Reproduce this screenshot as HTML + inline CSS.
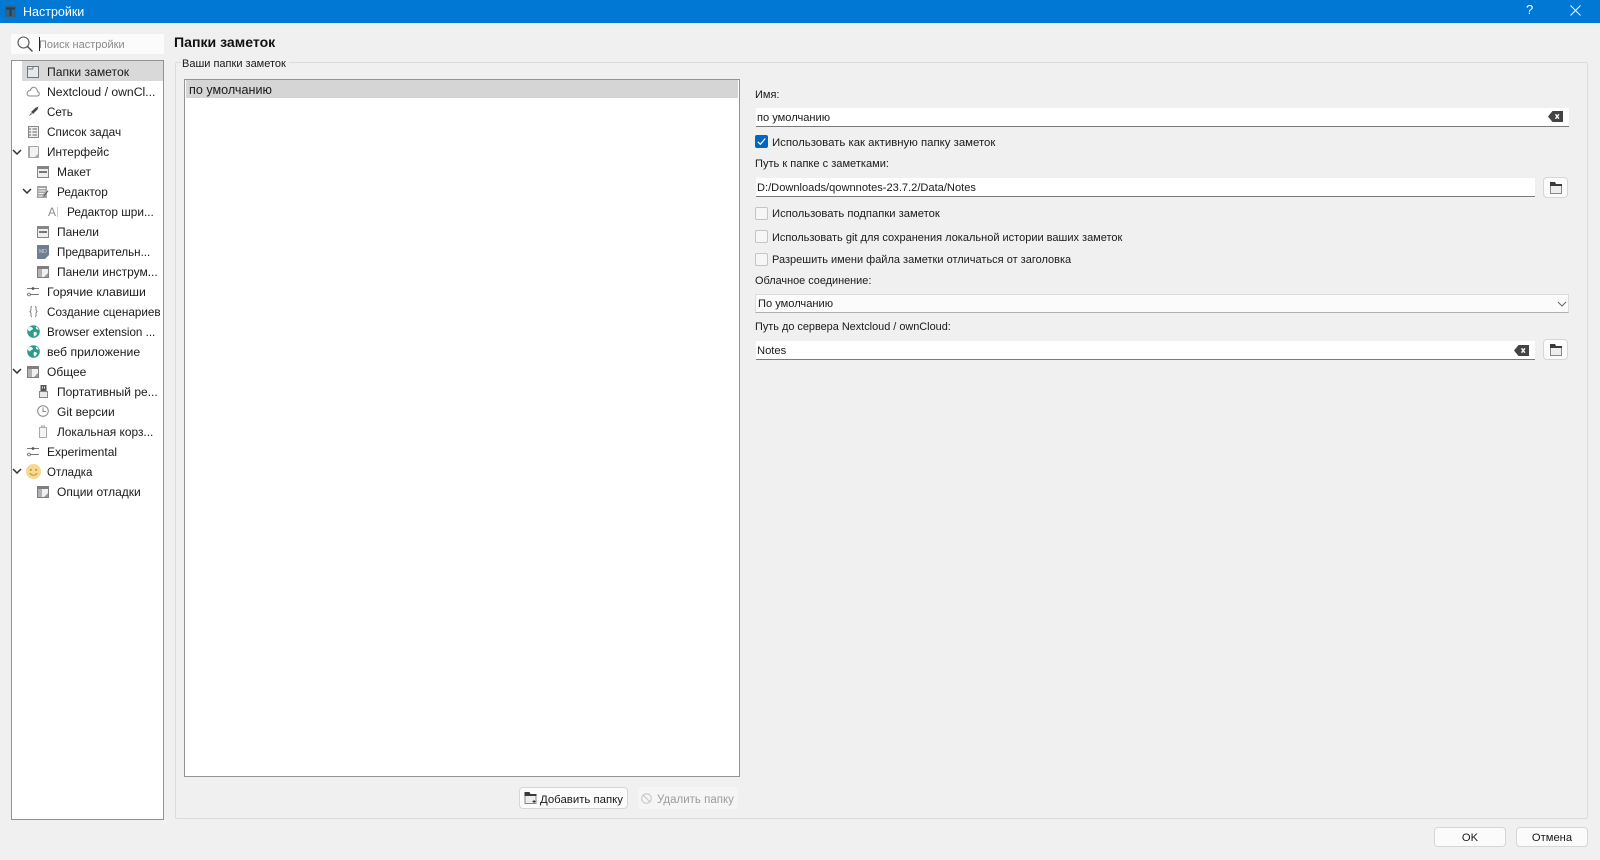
<!DOCTYPE html>
<html lang="ru">
<head>
<meta charset="utf-8">
<title>Настройки</title>
<style>
html,body{margin:0;padding:0;width:1600px;height:860px;overflow:hidden;background:#f0f0f0}
body{position:relative;font-family:"Liberation Sans","Noto Sans CJK SC",sans-serif;font-size:12px;color:#1a1a1a}
.a{position:absolute;white-space:nowrap}
.t{position:absolute;white-space:nowrap;height:20px;line-height:20px}
.f{font-size:11px}
svg{position:absolute;display:block;overflow:visible}
.input{position:absolute;background:#fff;border-bottom:1px solid #7a7a7a;box-sizing:border-box;height:19px;line-height:21px;padding-left:1px;font-size:11.100px}
.cb{position:absolute;width:13px;height:13px;box-sizing:border-box;border:1px solid #c4c4c4;background:#f6f6f6;border-radius:2px}
.btn{position:absolute;box-sizing:border-box;background:#fbfbfb;border:1px solid #d6d6d6;border-radius:4px;text-align:center}
</style>
</head>
<body>
<svg width="0" height="0" style="position:absolute">
<defs>
<symbol id="panel" viewBox="0 0 12 12"><rect x="0" y="0" width="12" height="12" fill="#858585"/><rect x="1" y="3" width="10" height="8" fill="#eee"/><rect x="2" y="5" width="8" height="2" fill="#777"/></symbol>
<symbol id="side" viewBox="0 0 12 12"><rect x="0" y="0" width="12" height="12" fill="#7f7f7f"/><rect x="1" y="3" width="4" height="8" fill="#b2b2b2"/><rect x="5" y="3" width="6" height="8" fill="#f0f0f0"/><path d="M11 7v4H7z" fill="#999"/></symbol>
<symbol id="sliders" viewBox="0 0 12 11"><path d="M0 2.500h12M0 8.500h12" stroke="#777" stroke-width="1"/><circle cx="6" cy="2.500" r="1.400" fill="#555"/><circle cx="2" cy="8.500" r="1.400" fill="#fff" stroke="#666" stroke-width=".8"/></symbol>
<symbol id="globe" viewBox="0 0 13 13"><circle cx="6.500" cy="6.500" r="6.300" fill="#2e9c8a"/><path d="M3 1.800c1.600.3 2.800.8 3 2.200-.9 1.100-2.400 1-3 2.500C1.600 6 .8 5 .9 4 1.400 3 2 2.300 3 1.800zM7 7c1.500-.3 2.500.3 3 1.200-.3 1.500-1.300 2.600-2.500 3.300C6.500 10.200 6.200 8.200 7 7zM9 1.500c1.300.6 2.300 1.700 2.800 3-.9.300-2 .1-2.600-.7-.4-.6-.4-1.400-.2-2.300z" fill="#f3f8f7"/></symbol>
<symbol id="folderdark" viewBox="0 0 12 12"><path d="M.5 3h11v8.500H.5z" fill="#ededed" stroke="#888" stroke-width="1"/><path d="M0 0h5l1 2h6v2H0z" fill="#3a3a3a"/></symbol>
<symbol id="clear" viewBox="0 0 15 11"><path d="M4.500 0H15v11H4.500L0 5.500z" fill="#444"/><path d="M7.500 3.300l3.400 4.400M10.900 3.300L7.500 7.700" stroke="#f4f4f4" stroke-width="1.500"/></symbol>
<symbol id="chev" viewBox="0 0 10 6"><path d="M1 1l4 4 4-4" fill="none" stroke="#333" stroke-width="1.500"/></symbol>
</defs>
</svg>

<!-- Title bar -->
<div class="a" style="left:0;top:0;width:1600px;height:23px;background:#0078d4"></div>
<div class="a" style="left:0;top:23px;width:1600px;height:1px;background:#d8eef8"></div>
<svg style="left:5px;top:6px" width="11" height="11" viewBox="0 0 11 11"><rect width="11" height="11" fill="#33617f"/><path d="M1 1.500h9v2H6.500V10h-2V3.500H1z" fill="#2a3d4a"/></svg>
<div class="t" style="left:23px;top:2px;color:#fff;font-size:12.500px">Настройки</div>
<div class="t" style="left:1526px;top:0;color:#fff;font-size:13px">?</div>
<svg style="left:1570px;top:5px" width="11" height="11" viewBox="0 0 11 11"><path d="M.5.500l10 10M10.500.500l-10 10" stroke="#fff" stroke-width="1" fill="none"/></svg>

<!-- Search -->
<div class="a" style="left:11px;top:34px;width:153px;height:20px;background:#fbfbfb"></div>
<svg style="left:17px;top:36px" width="16" height="16" viewBox="0 0 16 16"><circle cx="6.500" cy="6.500" r="5.500" fill="none" stroke="#555" stroke-width="1.100"/><path d="M10.500 10.500l5 5" stroke="#444" stroke-width="1.300"/></svg>
<div class="t" style="left:39px;top:35px;color:#8a8a8a;font-size:11px;height:20px">Поиск настройки</div>
<div class="a" style="left:39px;top:37px;width:1px;height:14px;background:#222"></div>

<!-- Tree -->
<div class="a" style="left:11px;top:60px;width:153px;height:760px;box-sizing:border-box;background:#fff;border:1px solid #939393"></div>
<div class="a" style="left:22px;top:61px;width:141px;height:20px;background:#d9d9d9"></div>

<div class="t" style="left:47px;top:62px;font-size:12.150px">Папки заметок</div>
<div class="t" style="left:47px;top:82px;font-size:12.200px">Nextcloud / ownCl...</div>
<div class="t" style="left:47px;top:103px;font-size:11.600px">Сеть</div>
<div class="t" style="left:47px;top:122px;font-size:11.850px">Список задач</div>
<div class="t" style="left:47px;top:142px;font-size:11.800px">Интерфейс</div>
<div class="t" style="left:57px;top:162px">Макет</div>
<div class="t" style="left:57px;top:182px;font-size:11.800px">Редактор</div>
<div class="t" style="left:67px;top:202px;font-size:11.850px">Редактор шри...</div>
<div class="t" style="left:57px;top:222px">Панели</div>
<div class="t" style="left:57px;top:243px;font-size:11.600px">Предварительн...</div>
<div class="t" style="left:57px;top:262px">Панели инструм...</div>
<div class="t" style="left:47px;top:282px;font-size:12.250px">Горячие клавиши</div>
<div class="t" style="left:47px;top:303px;font-size:11.700px">Создание сценариев</div>
<div class="t" style="left:47px;top:323px;font-size:11.600px">Browser extension ...</div>
<div class="t" style="left:47px;top:342px;font-size:12.250px">веб приложение</div>
<div class="t" style="left:47px;top:362px">Общее</div>
<div class="t" style="left:57px;top:382px">Портативный ре...</div>
<div class="t" style="left:57px;top:402px">Git версии</div>
<div class="t" style="left:57px;top:422px;font-size:11.900px">Локальная корз...</div>
<div class="t" style="left:47px;top:442px">Experimental</div>
<div class="t" style="left:47px;top:463px;font-size:11.500px">Отладка</div>
<div class="t" style="left:57px;top:482px">Опции отладки</div>

<!-- Chevrons -->
<svg style="left:12px;top:149px" width="10" height="6"><use href="#chev"/></svg>
<svg style="left:22px;top:188px" width="10" height="6"><use href="#chev"/></svg>
<svg style="left:12px;top:368px" width="10" height="6"><use href="#chev"/></svg>
<svg style="left:12px;top:468px" width="10" height="6"><use href="#chev"/></svg>

<!-- Tree icons -->
<svg style="left:27px;top:66px" width="12" height="12" viewBox="0 0 12 12"><rect x=".5" y=".5" width="11" height="11" fill="#e6e9ec" stroke="#70767c"/><path d="M.5 3h5l1-2.500" fill="none" stroke="#70767c"/></svg>
<svg style="left:26px;top:86px" width="14" height="11" viewBox="0 0 14 11"><path d="M3.500 10h7.500c3 0 3-4 .5-4.300C11 2 8.500.5 6.500 1.500 5 2.300 4.500 3.500 4.300 4.500 1.500 4.500 0 8 2 9.500c.4.300 1 .5 1.500.5z" fill="#fff" stroke="#8a8a8a"/></svg>
<svg style="left:28px;top:106px" width="11" height="11" viewBox="0 0 11 11"><path d="M10.500.5L7.500 1.800 3 6 5 8l4.500-4.500zM3 7L.8 10.200 4 8z" fill="#4a4a4a"/></svg>
<svg style="left:28px;top:126px" width="11" height="12" viewBox="0 0 11 12"><rect width="11" height="12" fill="#888"/><rect x="1" y="1" width="9" height="10" fill="#eee"/><path d="M1 3h2M1 6h2M1 9h2M4.500 3H9M4.500 6H9M4.500 9H9" stroke="#666"/></svg>
<svg style="left:28px;top:146px" width="11" height="12" viewBox="0 0 11 12"><rect width="11" height="12" rx="1" fill="#a5a5a5"/><path d="M2 1h8v7l-3 3H2z" fill="#f2f2f2"/></svg>
<svg style="left:37px;top:166px" width="12" height="12"><use href="#panel"/></svg>
<svg style="left:37px;top:186px" width="12" height="12" viewBox="0 0 12 12"><rect x="0" y="0" width="10" height="12" fill="#a5a5a5"/><path d="M1.500 2.500h7M1.500 5h7M1.500 7.500h5M1.500 10h4" stroke="#f3f3f3"/><path d="M11.500 5l-4 5-1 1.500 .3-2 3.700-5z" fill="#555"/></svg>
<div class="t" style="left:48px;top:202px;color:#8a8a8a;font-size:12px">A</div>
<div class="a" style="left:57px;top:207px;width:1px;height:10px;background:#ccc"></div>
<svg style="left:37px;top:226px" width="12" height="12"><use href="#panel"/></svg>
<svg style="left:37px;top:245px" width="12" height="14" viewBox="0 0 12 14"><path d="M0 0h12v10l-4 4H0z" fill="#6f7f8f"/><text x="2" y="8" font-size="5" fill="#cfd6dc" font-family="Liberation Sans">MD</text></svg>
<svg style="left:37px;top:266px" width="12" height="12"><use href="#side"/></svg>
<svg style="left:27px;top:286px" width="12" height="11"><use href="#sliders"/></svg>
<svg style="left:29px;top:306px" width="9" height="11" viewBox="0 0 9 11"><path d="M3 .5C1.500.5 2 2 2 3.500 2 4.800 1 5.500.5 5.500c.5 0 1.500.7 1.500 2S1.500 10.500 3 10.500M6 .5c1.500 0 1 1.500 1 3 0 1.300 1 2 1.500 2-.5 0-1.500.7-1.500 2s.5 3-1 3" fill="none" stroke="#777" stroke-width=".9"/></svg>
<svg style="left:27px;top:325px" width="13" height="13"><use href="#globe"/></svg>
<svg style="left:27px;top:345px" width="13" height="13"><use href="#globe"/></svg>
<svg style="left:27px;top:366px" width="12" height="12"><use href="#side"/></svg>
<svg style="left:39px;top:385px" width="9" height="13" viewBox="0 0 9 13"><rect x="1.500" y="0" width="6" height="6" fill="#555"/><rect x="3" y="1.500" width="1" height="2" fill="#ddd"/><rect x="5" y="1.500" width="1" height="2" fill="#ddd"/><rect x=".5" y="6.500" width="8" height="6" fill="#e9e9e9" stroke="#888"/></svg>
<svg style="left:37px;top:405px" width="12" height="12" viewBox="0 0 12 12"><circle cx="6" cy="6" r="5.300" fill="#fff" stroke="#888"/><path d="M6 2.500V6.500H9" fill="none" stroke="#888"/></svg>
<svg style="left:38px;top:425px" width="10" height="13" viewBox="0 0 10 13"><path d="M1.500 2.500h7v10h-7zM3.500 2.500V1h3v1.500" fill="#f4f4f4" stroke="#aaa"/></svg>
<svg style="left:27px;top:446px" width="12" height="11"><use href="#sliders"/></svg>
<svg style="left:26px;top:464px" width="15" height="15" viewBox="0 0 14 14"><circle cx="7" cy="7" r="7" fill="#f8d88e"/><circle cx="4.500" cy="5.500" r=".8" fill="#a5752a"/><circle cx="9.500" cy="5.500" r=".8" fill="#a5752a"/><path d="M3.500 8.500c1.500 2.500 5.500 2.500 7 0" fill="none" stroke="#b8862f" stroke-width=".8"/></svg>
<svg style="left:37px;top:486px" width="12" height="12"><use href="#side"/></svg>

<!-- Header -->
<div class="t" style="left:174px;top:32px;font-weight:bold;font-size:14.100px;color:#111">Папки заметок</div>

<!-- Group -->
<div class="a" style="left:175px;top:62px;width:1413px;height:757px;box-sizing:border-box;border:1px solid #dcdcdc;border-radius:2px"></div>
<div class="a" style="left:181px;top:56px;width:108px;height:14px;background:#f0f0f0"></div>
<div class="t f" style="left:182px;top:54px">Ваши папки заметок</div>

<!-- List -->
<div class="a" style="left:184px;top:79px;width:556px;height:698px;box-sizing:border-box;background:#fff;border:1px solid #939393"></div>
<div class="a" style="left:186px;top:80px;width:552px;height:18px;background:#d5d5d5"></div>
<div class="t" style="left:189px;top:80px;font-size:12.600px">по умолчанию</div>

<!-- Bottom-of-list buttons -->
<div class="btn" style="left:519px;top:787px;width:109px;height:22px"></div>
<svg style="left:524px;top:792px" width="13" height="12" viewBox="0 0 12 12"><path d="M.5 3h11v8.500H.5z" fill="#ededed" stroke="#888"/><path d="M0 0h5l1 2h6v2H0z" fill="#3a3a3a"/><path d="M8 9.500h3M9.500 8v3" stroke="#333"/></svg>
<div class="t" style="left:540px;top:790px;font-size:11.400px">Добавить папку</div>
<div class="a" style="left:638px;top:787px;width:100px;height:22px;background:#f5f5f5;border-radius:3px"></div>
<svg style="left:641px;top:793px" width="11" height="11" viewBox="0 0 11 11"><circle cx="5.500" cy="5.500" r="4.800" fill="none" stroke="#c4c4c4" stroke-width="1"/><path d="M2 2l7 7" stroke="#c4c4c4" stroke-width="1"/></svg>
<div class="t" style="left:657px;top:790px;font-size:11.500px;color:#9c9c9c">Удалить папку</div>

<!-- Right form -->
<div class="t f" style="left:755px;top:85px">Имя:</div>
<div class="input" style="left:756px;top:108px;width:813px">по умолчанию</div>
<svg style="left:1548px;top:111px" width="15" height="11"><use href="#clear"/></svg>

<div class="cb" style="left:755px;top:135px;background:#0067c0;border-color:#0067c0"></div>
<svg style="left:757px;top:137px" width="9" height="9" viewBox="0 0 9 9"><path d="M.8 4.800l2.500 2.500L8.300 1.500" fill="none" stroke="#fff" stroke-width="1.200"/></svg>
<div class="t" style="left:772px;top:133px;font-size:11.400px">Использовать как активную папку заметок</div>

<div class="t" style="left:755px;top:154px;font-size:11.070px">Путь к папке с заметками:</div>
<div class="input" style="left:756px;top:178px;width:779px">D:/Downloads/qownnotes-23.7.2/Data/Notes</div>
<div class="btn" style="left:1543px;top:177px;width:25px;height:21px"></div>
<svg style="left:1550px;top:182px" width="12" height="12"><use href="#folderdark"/></svg>

<div class="cb" style="left:755px;top:207px"></div>
<div class="t" style="left:772px;top:204px;font-size:11.230px">Использовать подпапки заметок</div>
<div class="cb" style="left:755px;top:230px"></div>
<div class="t f" style="left:772px;top:228px">Использовать git для сохранения локальной истории ваших заметок</div>
<div class="cb" style="left:755px;top:253px"></div>
<div class="t f" style="left:772px;top:250px">Разрешить имени файла заметки отличаться от заголовка</div>

<div class="t" style="left:755px;top:271px;font-size:10.900px">Облачное соединение:</div>
<div class="a" style="left:755px;top:294px;width:814px;height:19px;box-sizing:border-box;background:#fbfbfb;border:1px solid #dcdcdc;border-bottom-color:#b0b0b0;line-height:19px;padding-left:2px;font-size:11.100px">По умолчанию</div>
<svg style="left:1557px;top:301px" width="10" height="6" viewBox="0 0 10 6"><path d="M1 1l4 4 4-4" fill="none" stroke="#666" stroke-width="1"/></svg>

<div class="t" style="left:755px;top:317px;font-size:10.900px">Путь до сервера Nextcloud / ownCloud:</div>
<div class="input" style="left:756px;top:341px;width:779px;font-size:11.200px">Notes</div>
<svg style="left:1514px;top:345px" width="15" height="11"><use href="#clear"/></svg>
<div class="btn" style="left:1543px;top:339px;width:25px;height:21px"></div>
<svg style="left:1550px;top:344px" width="12" height="12"><use href="#folderdark"/></svg>

<!-- Dialog buttons -->
<div class="btn" style="left:1434px;top:827px;width:72px;height:20px;line-height:21px;font-size:11.200px">OK</div>
<div class="btn" style="left:1516px;top:827px;width:72px;height:20px;line-height:21px;font-size:11.200px">Отмена</div>
</body>
</html>
